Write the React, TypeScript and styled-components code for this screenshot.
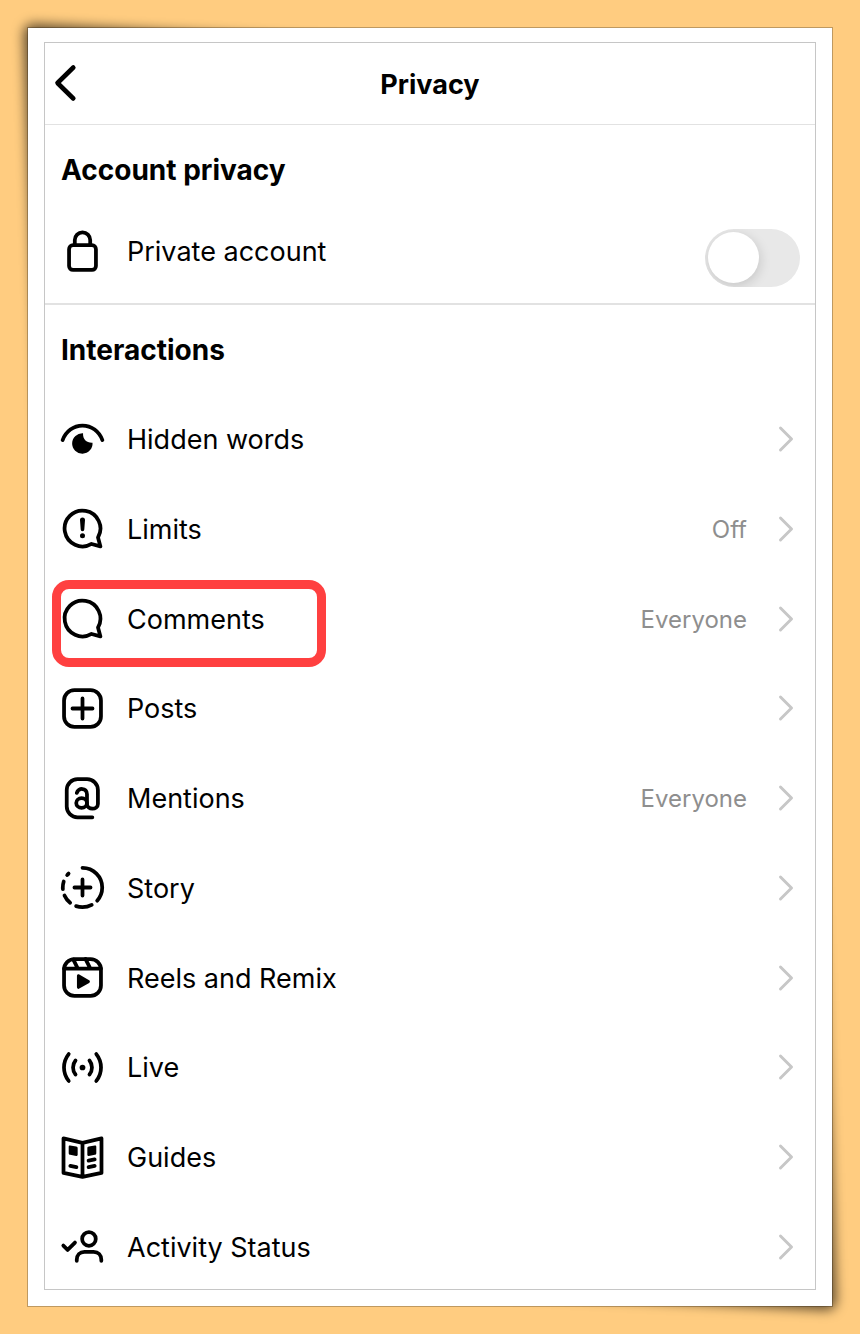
import React, { useState } from "react";
import styled, { createGlobalStyle } from "styled-components";

const GlobalStyle = createGlobalStyle`
  *, *::before, *::after { box-sizing: border-box; }
  body {
    margin: 0;
    background: #ffcc80;
    color: #000;
    font-family: Inter, "Liberation Sans", sans-serif;
    font-size: 27px;
    line-height: 36px;
  }
  button, input { font: inherit; color: inherit; margin: 0; }
`;

const Page = styled.div`
  display: flex;
  min-height: 100vh;
  padding: 28px;
`;

/* White photo mount with lifted top-left and bottom-right corners. */
const Mount = styled.div`
  position: relative;
  z-index: 0;
  flex: 1;
  display: flex;
  padding: 14px 16px 16px;

  &::before,
  &::after {
    content: "";
    position: absolute;
    z-index: -2;
    width: 60%;
    height: 60%;
    border-radius: 12px;
    background: rgba(0, 0, 0, 0.6);
    filter: blur(6px);
    transform: skew(2deg, 3deg);
  }
  &::before {
    top: -5px;
    left: -5px;
    transform-origin: top left;
  }
  &::after {
    right: -5px;
    bottom: -5px;
    transform-origin: bottom right;
  }
`;

const MountPaper = styled.div`
  position: absolute;
  inset: 0;
  z-index: -1;
  background: #fff;
  box-shadow: 0 0 0 1px rgba(0, 0, 0, 0.25);
`;

const Screen = styled.main`
  flex: 1;
  display: flex;
  flex-direction: column;
  min-width: 0;
  border: 1px solid #c6c6c6;
  background: #fff;
`;

const Header = styled.header`
  display: grid;
  grid-template-columns: 48px 1fr 48px;
  align-items: center;
  height: 82px;
  border-bottom: 1px solid #e2e2e2;
`;

const BackButton = styled.button`
  display: flex;
  padding: 0 0 0 8px;
  border: 0;
  background: none;
`;

const Title = styled.h1`
  margin: 0;
  padding-top: 2px;
  font-size: 27px;
  font-weight: 700;
  text-align: center;
`;

const Section = styled.section<{ $fill?: boolean }>`
  display: flex;
  flex-direction: column;
  flex: ${(p) => (p.$fill ? "1" : "none")};
  padding-top: 27px;
`;

const PrivacySection = styled(Section)`
  padding-bottom: 10px;
  border-bottom: 2px solid #e2e2e2;
`;

const SectionTitle = styled.h2`
  margin: 0 16px 21px;
  font-size: 28px;
  font-weight: 700;
`;

const List = styled.ul`
  flex: 1;
  display: flex;
  flex-direction: column;
  justify-content: space-between;
  margin: 8px 0 0;
  padding: 0;
  list-style: none;
`;

const Item = styled.li`
  position: relative;
`;

const Row = styled.div`
  display: flex;
  align-items: center;
  width: 100%;
  height: 84px;
  padding: 0 15px 0 16px;
  border: 0;
  background: none;
  text-align: left;
`;

const Glyph = styled.svg`
  flex: none;
  width: 43px;
  height: 43px;
  overflow: visible;
  fill: none;
  stroke: #000;
  stroke-width: 2.1;
  stroke-linecap: round;
  stroke-linejoin: round;

  .solid { fill: #000; stroke: none; }
`;

const Label = styled.span`
  flex: 1;
  margin-left: 23px;
  padding-top: 2px;
`;

const Value = styled.span`
  padding-top: 2px;
  font-size: 24px;
  color: #8e8e8e;
`;

const Chevron = styled.svg`
  flex: none;
  width: 22px;
  height: 28px;
  margin-left: 31px;
  fill: none;
  stroke: #c7c7c7;
  stroke-width: 3;
  stroke-linecap: round;
  stroke-linejoin: round;
`;

const Toggle = styled.input`
  appearance: none;
  align-self: flex-end;
  width: 95px;
  height: 58px;
  margin-bottom: 6px;
  border-radius: 29px;
  background: #e8e8e8;
  overflow: hidden;

  &::before {
    content: "";
    display: block;
    width: 51px;
    height: 51px;
    margin: 3px;
    border-radius: 50%;
    background: #fff;
    box-shadow: 1px 3px 12px rgba(0, 0, 0, 0.15);
  }
  &:checked { background: #34c759; }
  &:checked::before { margin-left: 41px; }
`;

const Highlight = styled.span`
  position: absolute;
  top: 3px;
  left: 7px;
  width: 274px;
  height: 87px;
  border: 9px solid #ff4040;
  border-radius: 17px;
  pointer-events: none;
`;

const Icon = ({ children }: { children: React.ReactNode }) => (
  <Glyph viewBox="0 0 24 24" aria-hidden="true">{children}</Glyph>
);

const Bubble = () => <path d="M20.656 17.008a9.993 9.993 0 1 0-3.59 3.615L22 22Z" />;
const RoundedSquare = () => <rect x="1.7" y="1.7" width="20.6" height="20.6" rx="5.8" />;

const lockIcon = (
  <Icon>
    <rect x="4.5" y="8.5" width="15" height="13.8" rx="2.2" />
    <path d="M7.7 8.5V5.6a4.3 4.3 0 0 1 8.6 0v2.9" />
  </Icon>
);

const items = [
  {
    label: "Hidden words",
    icon: (
      <Icon>
        <path d="M.9 12.3C2.7 7.4 7 4.2 12 4.2s9.3 3.2 11.1 8.1" />
        <path className="solid" d="M12.3 8.5C12.1 11.8 14.3 14 17.6 13.8A5.7 5.7 0 1 1 12.3 8.5Z" />
      </Icon>
    ),
  },
  {
    label: "Limits",
    value: "Off",
    icon: (
      <Icon>
        <Bubble />
        <path className="solid" d="M10.6 7.3a1.4 1.4 0 0 1 2.8 0l-.4 5.2a1 1 0 0 1-2 0Z" />
        <circle className="solid" cx="12" cy="16" r="1.4" />
      </Icon>
    ),
  },
  { label: "Comments", value: "Everyone", highlighted: true, icon: <Icon><Bubble /></Icon> },
  {
    label: "Posts",
    icon: (
      <Icon>
        <RoundedSquare />
        <path d="M6.4 12h11.2M12 6.4v11.2" />
      </Icon>
    ),
  },
  {
    label: "Mentions",
    value: "Everyone",
    icon: (
      <Icon>
        <path d="M17.5 22.500H9.200a6 6 0 0 1-6-6V7.200a6 6 0 0 1 6-6h5.400a6 6 0 0 1 6 6v7.800c0 3.500-6.100 3.500-6.100 0V9.600c0-3.700-4.900-3.800-5.700-.7" />
        <ellipse cx="11.5" cy="14.5" rx="3" ry="2.7" />
      </Icon>
    ),
  },
  {
    label: "Story",
    icon: (
      <Icon>
        <circle
          cx="12"
          cy="12"
          r="11"
          pathLength="360"
          strokeDasharray="132 20 47 20 27 19 23 21 6 45"
          transform="rotate(-90 12 12)"
        />
        <path d="M7.5 12h9M12 7.5v9" />
      </Icon>
    ),
  },
  {
    label: "Reels and Remix",
    icon: (
      <Icon>
        <RoundedSquare />
        <path d="M1.7 7h20.6M6.9 2l2.5 5M13.7 1.7 16.4 7" />
        <path className="solid" d="M8.9 11v6.500c0 .7.7 1.100 1.300.7l5.500-3.200c.6-.4.6-1.100 0-1.500l-5.500-3.200c-.6-.4-1.300 0-1.300.7Z" />
      </Icon>
    ),
  },
  {
    label: "Live",
    icon: (
      <Icon>
        <path d="M4.300 4.500a12 12 0 0 0 0 15M19.700 4.500a12 12 0 0 1 0 15M8.100 8.100a6.200 6.200 0 0 0 0 7.800M15.900 8.100a6.200 6.200 0 0 1 0 7.800" />
        <circle className="solid" cx="12" cy="12" r="1.6" />
      </Icon>
    ),
  },
  {
    label: "Guides",
    icon: (
      <Icon>
        <path d="M1.400 1.300 12 3.800l10.600-2.500v19.300L12 22.800 1.400 20.600ZM12 3.800v19M5.200 16.700l3.400.7M15.400 13.700l3.400-.7M15.400 17.400l3.400-.7" />
        <path className="solid" d="M4.300 6c0-.5.300-.8.800-.7l3.400.6c.5.100.8.400.8.900v3.700c0 .5-.3.700-.8.600l-3.400-.6c-.5-.1-.8-.4-.8-.9ZM19.700 6c0-.5-.3-.8-.8-.7l-3.400.6c-.5.100-.8.400-.8.900v3.700c0 .5.300.7.800.6l3.400-.6c.5-.1.800-.4.800-.9Z" />
      </Icon>
    ),
  },
  {
    label: "Activity Status",
    icon: (
      <Icon>
        <circle cx="15.6" cy="7.8" r="3.8" />
        <path d="M8.800 20v-.6c0-2.600 1.700-4.400 4.300-4.400h5.100c2.600 0 4.300 1.800 4.300 4.400v.6M1.300 11.500l2.400 2.400 4.100-4.100" />
      </Icon>
    ),
  },
];

export default function App() {
  const [isPrivate, setPrivate] = useState(false);

  return (
    <>
      <GlobalStyle />
      <Page>
        <Mount>
          <MountPaper />
          <Screen>
            <Header>
              <BackButton type="button" aria-label="Back">
                <svg width="26" height="40" viewBox="0 0 26 40" fill="none" stroke="#000" strokeWidth="4.6" strokeLinecap="round" strokeLinejoin="round" aria-hidden="true">
                  <path d="M20.3 3.500 4.500 19 20.300 34.500" />
                </svg>
              </BackButton>
              <Title>Privacy</Title>
            </Header>

            <PrivacySection>
              <SectionTitle>Account privacy</SectionTitle>
              <Row>
                {lockIcon}
                <Label as="label" htmlFor="private-account">Private account</Label>
                <Toggle
                  id="private-account"
                  type="checkbox"
                  role="switch"
                  checked={isPrivate}
                  onChange={(e) => setPrivate(e.target.checked)}
                />
              </Row>
            </PrivacySection>

            <Section $fill>
              <SectionTitle>Interactions</SectionTitle>
              <List>
                {items.map((item) => (
                  <Item key={item.label}>
                    <Row as="button" type="button">
                      {item.icon}
                      <Label>{item.label}</Label>
                      {item.value && <Value>{item.value}</Value>}
                      <Chevron viewBox="0 0 22 28" aria-hidden="true">
                        <path d="M2.500 3 13.500 14 2.500 25" />
                      </Chevron>
                    </Row>
                    {item.highlighted && <Highlight />}
                  </Item>
                ))}
              </List>
            </Section>
          </Screen>
        </Mount>
      </Page>
    </>
  );
}
